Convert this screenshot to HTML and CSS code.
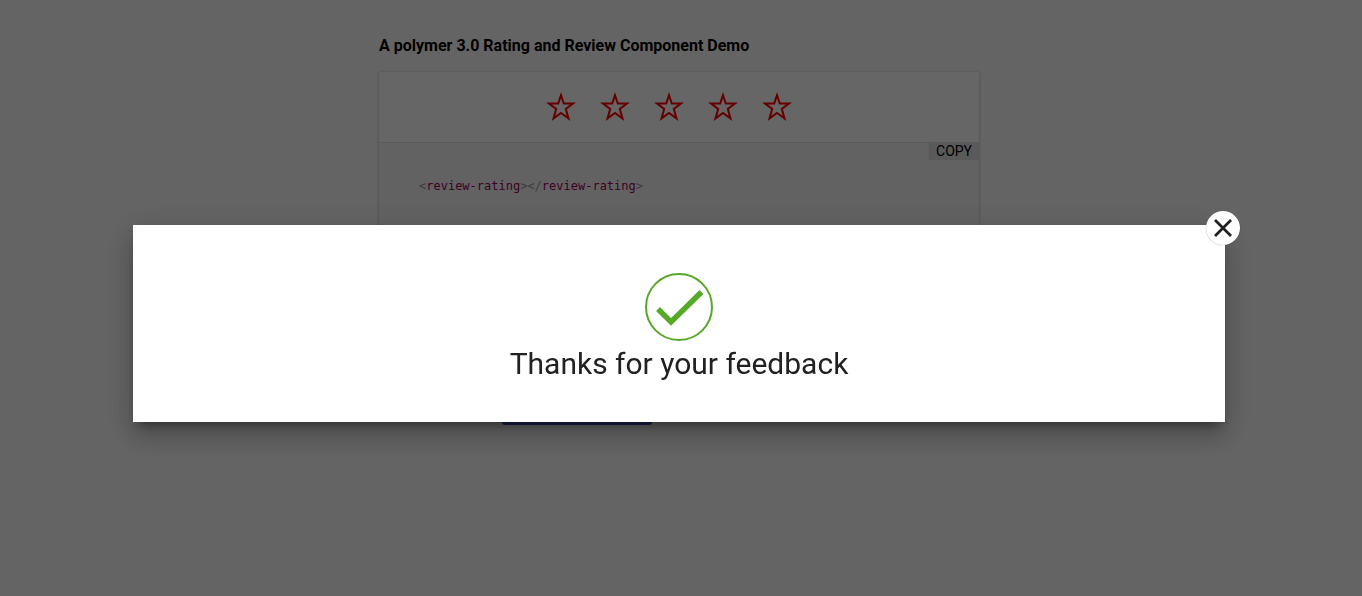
FILE: index.html
```html
<!DOCTYPE html>
<html lang="en">
<head>
<meta charset="utf-8">
<title>Rating and Review Component Demo</title>
<link rel="stylesheet" href="styles.css">
</head>
<body>
<svg class="defs" aria-hidden="true">
  <symbol id="star" viewBox="0 0 28 28">
    <path d="M14 3 16.600 10.800H25.200L18.500 15.800 21 24.600 14 19.500 7 24.600 9.500 15.800 2.800 10.800H11.400Z" fill="none" stroke="currentColor" stroke-width="1.900"/>
  </symbol>
</svg>
<main class="page">
  <h3 class="title">A polymer 3.0 Rating and Review Component Demo</h3>
  <section class="card">
    <div class="stars">
      <button class="star" aria-label="1 star"><svg><use href="#star"/></svg></button>
      <button class="star" aria-label="2 stars"><svg><use href="#star"/></svg></button>
      <button class="star" aria-label="3 stars"><svg><use href="#star"/></svg></button>
      <button class="star" aria-label="4 stars"><svg><use href="#star"/></svg></button>
      <button class="star" aria-label="5 stars"><svg><use href="#star"/></svg></button>
    </div>
    <div class="snippet">
      <button class="copy">COPY</button>
      <pre class="code"><span class="punct">&lt;</span>review-rating<span class="punct">&gt;&lt;/</span>review-rating<span class="punct">&gt;</span></pre>
    </div>
  </section>
  <button class="submit" aria-label="Open review"></button>
</main>
<div class="overlay">
  <div class="dialog" role="dialog" aria-labelledby="message">
    <button class="close" aria-label="Close">
      <svg viewBox="0 0 34 34"><path d="M9 9 25 25M25 9 9 25" stroke="#212121" stroke-width="2.7"/></svg>
    </button>
    <svg class="check" viewBox="0 0 68 68">
      <circle cx="34" cy="34" r="33" fill="none" stroke="#57a82a" stroke-width="2"/>
      <path d="M13 36 26 49 56.500 19" fill="none" stroke="#55aa26" stroke-width="5.500"/>
    </svg>
    <p class="message" id="message">Thanks for your feedback</p>
  </div>
</div>
</body>
</html>
```
FILE: styles.css
```css
* { box-sizing: border-box; }

body {
  margin: 0;
  background: #fafafa;
  font-family: Roboto, "Liberation Sans", sans-serif;
}

button {
  border: 0;
  padding: 0;
  font: inherit;
}

.defs {
  position: absolute;
  width: 0;
  height: 0;
}

.page {
  max-width: 604px;
  margin: 0 auto;
  padding: 36px 4px 0 0;
}

.title {
  margin: 0 0 16px;
  font-size: 16px;
  line-height: 20px;
  font-weight: 700;
}

.card {
  background: #fff;
  box-shadow: 0 1px 3px rgba(0, 0, 0, 0.2), 0 0 2px rgba(0, 0, 0, 0.12);
}

.stars {
  display: flex;
  justify-content: center;
  gap: 24px;
  padding: 20px 20px 20px 0;
}

.star {
  background: none;
  color: #ff0000;
  width: 30px;
  height: 30px;
}

.star svg {
  display: block;
  width: 30px;
  height: 30px;
}

.snippet {
  display: flex;
  flex-direction: column;
  background: #f5f5f5;
  border-top: 1px solid #e0e0e0;
}

.copy {
  align-self: flex-end;
  padding: 0 7px;
  background: #e0e0e0;
  font-size: 14px;
  line-height: 17px;
}

.code {
  margin: 0;
  padding: 17px 40px 161px;
  color: #990055;
  font: 12px/18px "DejaVu Sans Mono", "Liberation Mono", monospace;
}

.punct { color: #999; }

.submit {
  display: block;
  width: 150px;
  height: 36px;
  margin: 33px 0 0 123px;
  border-radius: 3px;
  background: #3f51b5;
}

.overlay {
  position: fixed;
  inset: 0;
  display: grid;
  align-items: center;
  padding: 51px 137px 0 133px;
  background: rgba(0, 0, 0, 0.6);
}

.dialog {
  position: relative;
  display: flex;
  flex-direction: column;
  align-items: center;
  padding: 48px 24px 40px;
  background: #fff;
  color: #212121;
  box-shadow: 0 16px 24px 2px rgba(0, 0, 0, 0.14),
    0 6px 30px 5px rgba(0, 0, 0, 0.12),
    0 8px 10px -5px rgba(0, 0, 0, 0.4);
}

.close {
  position: absolute;
  top: -14px;
  right: -15px;
  width: 34px;
  height: 34px;
  border-radius: 50%;
  background: #fff;
  box-shadow: 0 0 1px rgba(0, 0, 0, 0.5);
}

.close svg { display: block; }

.check {
  width: 68px;
  height: 68px;
}

.message {
  margin: 4px 0 0;
  font-size: 30px;
  line-height: 37px;
}
```
